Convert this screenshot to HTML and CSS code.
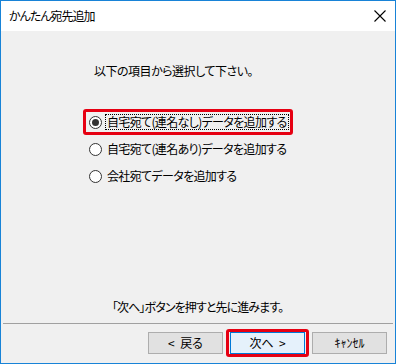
FILE: index.html
```html
<!DOCTYPE html>
<html lang="ja">
<head>
<meta charset="utf-8">
<title>かんたん宛先追加</title>
<link rel="stylesheet" href="styles.css">
</head>
<body>
<div class="window">
  <div class="titlebar">
    <span class="title">かんたん宛先追加</span>
    <svg class="close" width="12" height="12" viewBox="0 0 12 12"><path d="M0.5 0.5L11.5 11.5M11.5 0.5L0.5 11.5" stroke="#000" stroke-width="1.1" fill="none"/></svg>
  </div>
  <div class="client">
    <p class="prompt">以下の項目から選択して下さい。</p>
    <div class="options">
      <div class="option">
        <span class="radio checked"></span><span class="label focus">自宅宛て(連名なし)データを追加する</span>
        <span class="mark mark-option"></span>
      </div>
      <div class="option">
        <span class="radio"></span><span class="label">自宅宛て(連名あり)データを追加する</span>
      </div>
      <div class="option">
        <span class="radio"></span><span class="label">会社宛てデータを追加する</span>
      </div>
    </div>
    <p class="hint">「次へ」ボタンを押すと先に進みます。</p>
    <div class="sep"></div>
    <div class="buttons">
      <button class="btn">&lt;&nbsp; 戻る</button>
      <div class="btn-wrap">
        <button class="btn default">次へ&nbsp; &gt;</button>
        <span class="mark mark-btn"></span>
      </div>
      <button class="btn">ｷｬﾝｾﾙ</button>
    </div>
  </div>
</div>
</body>
</html>
```
FILE: styles.css
```css
* { box-sizing: border-box; }
html, body { margin: 0; padding: 0; }
body {
  width: 396px;
  height: 364px;
  font-family: "Noto Sans CJK JP", "Noto Sans", sans-serif;
  font-size: 12px;
  font-feature-settings: "palt";
  color: #000;
  background: #f0f0f0;
}
.window {
  width: 396px;
  height: 364px;
  border: 1px solid #1883d7;
  display: flex;
  flex-direction: column;
  background: #f0f0f0;
}
.titlebar {
  height: 30px;
  background: #fff;
  display: flex;
  align-items: center;
  justify-content: space-between;
  padding: 0 9px 0 8px;
  flex: none;
}
.title {
  line-height: 14px;
  margin-top: -1px;
  letter-spacing: -1px;
}
.close { display: block; margin-top: -1px; }
.client {
  flex: 1;
  display: flex;
  flex-direction: column;
  padding: 0 2px;
}
.prompt {
  margin: 33px 0 0 91px;
  line-height: 14px;
  letter-spacing: -0.5px;
}
.options {
  margin: 37px 0 0 86px;
  display: flex;
  flex-direction: column;
  gap: 13px;
}
.option {
  position: relative;
  display: flex;
  align-items: center;
  height: 14px;
}
.radio {
  width: 13px;
  height: 13px;
  border: 1px solid #333;
  border-radius: 50%;
  background: #fff;
  flex: none;
  display: flex;
  align-items: center;
  justify-content: center;
}
.radio.checked::after {
  content: "";
  width: 7px;
  height: 7px;
  border-radius: 50%;
  background: #333;
}
.label {
  margin-left: 3px;
  line-height: 14px;
  padding: 0 1px;
  border: 1px solid transparent;
  letter-spacing: -0.65px;
}
.label.focus { border: 1px dotted #000; }
.mark {
  position: absolute;
  border: 3px solid #e60012;
  border-radius: 3px;
  pointer-events: none;
}
.mark-option {
  left: -6px;
  top: -6px;
  width: 210px;
  height: 26px;
}
.hint {
  margin: auto 0 0 109px;
  line-height: 14px;
  letter-spacing: -0.9px;
}
.sep {
  height: 1px;
  background: #a0a0a0;
  margin: 9px 0 0 0;
}
.buttons {
  display: flex;
  justify-content: flex-end;
  gap: 7px;
  padding: 8px 6px 9px 0;
}
.btn {
  width: 75px;
  height: 22px;
  background: #e1e1e1;
  border: 1px solid #adadad;
  font-family: "Noto Sans CJK JP", "Noto Sans", sans-serif;
  font-size: 12px;
  font-feature-settings: "palt";
  color: #000;
  padding: 0;
  line-height: 18px;
}
.btn.default {
  background: #e5f1fb;
  border: 1px solid #0078d7;
}
.btn-wrap {
  position: relative;
  display: flex;
}
.mark-btn {
  left: -4px;
  top: -3px;
  width: 83px;
  height: 28px;
}
```
